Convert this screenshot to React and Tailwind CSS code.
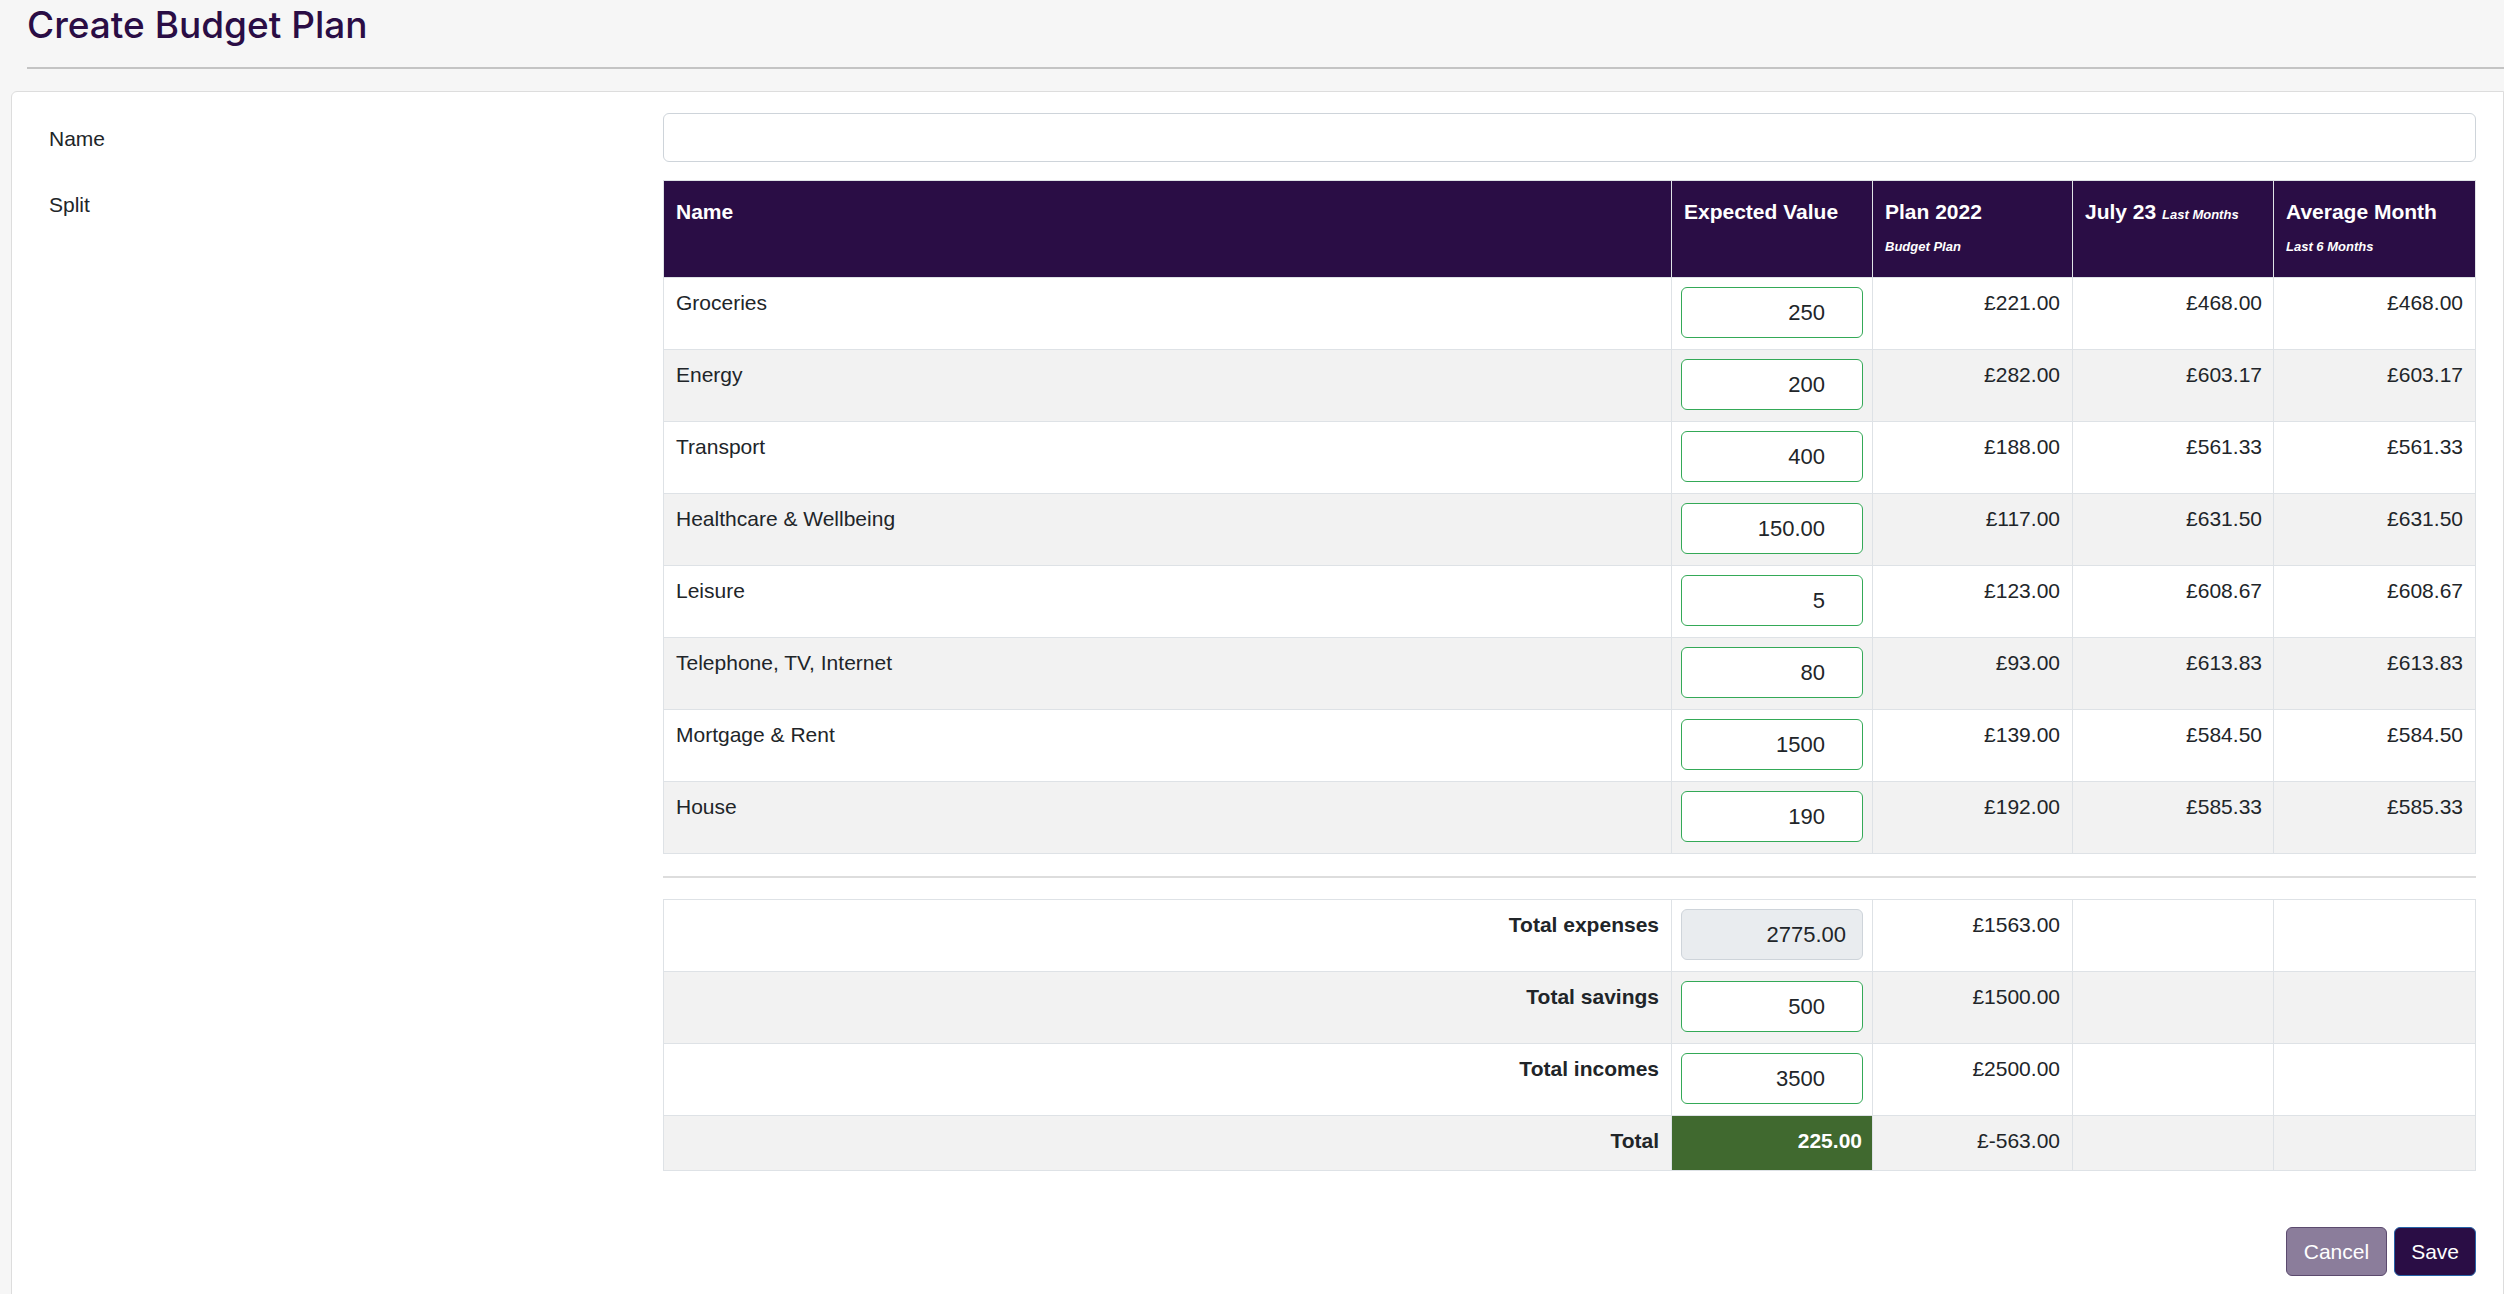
import React from "react";

const rows = [
  { name: "Groceries", val: "250", plan: "£221.00", july: "£468.00", avg: "£468.00" },
  { name: "Energy", val: "200", plan: "£282.00", july: "£603.17", avg: "£603.17" },
  { name: "Transport", val: "400", plan: "£188.00", july: "£561.33", avg: "£561.33" },
  { name: "Healthcare & Wellbeing", val: "150.00", plan: "£117.00", july: "£631.50", avg: "£631.50" },
  { name: "Leisure", val: "5", plan: "£123.00", july: "£608.67", avg: "£608.67" },
  { name: "Telephone, TV, Internet", val: "80", plan: "£93.00", july: "£613.83", avg: "£613.83" },
  { name: "Mortgage & Rent", val: "1500", plan: "£139.00", july: "£584.50", avg: "£584.50" },
  { name: "House", val: "190", plan: "£192.00", july: "£585.33", avg: "£585.33" },
];

function Cols() {
  return (
    <colgroup>
      <col className="w-[1008px]" />
      <col className="w-[201px]" />
      <col className="w-[200px]" />
      <col className="w-[201px]" />
      <col className="w-[202px]" />
    </colgroup>
  );
}

function ValInput({ value, readOnly }) {
  if (readOnly) {
    return (
      <input
        type="text"
        readOnly
        defaultValue={value}
        className="block w-full h-[51px] rounded-[6px] border border-[#ced4da] bg-[#e9ecef] pr-[16px] text-right text-[22px] leading-[32px] text-[#212529] outline-none font-['Liberation_Sans',Arial,sans-serif]"
      />
    );
  }
  return (
    <input
      type="text"
      defaultValue={value}
      className="block w-full h-[51px] rounded-[6px] border border-[#34a957] bg-white pr-[37px] text-right text-[22px] leading-[32px] text-[#212529] outline-none font-['Liberation_Sans',Arial,sans-serif]"
    />
  );
}

export default function App() {
  const td = "border border-[#dee2e6] align-top pt-[9px] pb-[11px]";
  return (
    <div className="min-h-screen bg-[#f6f6f6] font-['Liberation_Sans',Arial,sans-serif] text-[#212529]">
      <div className="pl-[27px] pt-[2px]">
        <h1 className="font-['Inter','Liberation_Sans',sans-serif] text-[37px] leading-[46px] text-[#2a0d45] font-medium">
          Create Budget Plan
        </h1>
        <div className="mt-[19px] h-[2px] bg-[#c4c4c4]" />
      </div>

      <div className="ml-[11px] mt-[22px] rounded-tl-[6px] border border-[#dddddd] bg-white pl-[37px] pr-[28px] pt-[21px] pb-[24px]">
        <div className="grid grid-cols-[614px_1fr] gap-y-[18px]">
          <div className="pt-[10px] text-[21px] leading-[32px]">Name</div>
          <input
            type="text"
            className="block w-full h-[49px] rounded-[6px] border border-[#ced4da] bg-white outline-none"
          />

          <div className="pt-[9px] text-[21px] leading-[32px]">Split</div>
          <div>
            <table className="w-full table-fixed border-collapse text-[21px] leading-[32px]">
              <Cols />
              <thead>
                <tr className="bg-[#2a0d45] text-white">
                  <th className="border border-[#dee2e6] h-[97px] align-top pt-[15px] pl-3 text-left font-bold">Name</th>
                  <th className="border border-[#dee2e6] align-top pt-[15px] pl-3 text-left font-bold">Expected Value</th>
                  <th className="border border-[#dee2e6] align-top pt-[15px] pl-3 text-left font-bold">
                    <div>Plan 2022</div>
                    <div className="mt-[9px] text-[13px] leading-[20px] italic font-bold">Budget Plan</div>
                  </th>
                  <th className="border border-[#dee2e6] align-top pt-[15px] pl-3 text-left font-bold">
                    July 23 <span className="text-[13px] italic font-bold">Last Months</span>
                  </th>
                  <th className="border border-[#dee2e6] align-top pt-[15px] pl-3 text-left font-bold">
                    <div>Average Month</div>
                    <div className="mt-[9px] text-[13px] leading-[20px] italic font-bold">Last 6 Months</div>
                  </th>
                </tr>
              </thead>
              <tbody>
                {rows.map((r, i) => (
                  <tr key={r.name} className={i % 2 === 1 ? "bg-[#f2f2f2]" : "bg-white"}>
                    <td className={`${td} pl-3`}>{r.name}</td>
                    <td className={`${td} px-[9px]`}>
                      <ValInput value={r.val} />
                    </td>
                    <td className={`${td} pr-3 text-right`}>{r.plan}</td>
                    <td className={`${td} pr-[11px] text-right`}>{r.july}</td>
                    <td className={`${td} pr-3 text-right`}>{r.avg}</td>
                  </tr>
                ))}
              </tbody>
            </table>

            <div className="mt-[22px] mb-[21px] h-[2px] bg-[#dddddd]" />

            <table className="w-full table-fixed border-collapse text-[21px] leading-[32px]">
              <Cols />
              <tbody>
                <tr className="bg-white">
                  <td className={`${td} pr-3 text-right font-bold`}>Total expenses</td>
                  <td className={`${td} px-[9px]`}>
                    <ValInput value="2775.00" readOnly />
                  </td>
                  <td className={`${td} pr-3 text-right`}>£1563.00</td>
                  <td className={td}></td>
                  <td className={td}></td>
                </tr>
                <tr className="bg-[#f2f2f2]">
                  <td className={`${td} pr-3 text-right font-bold`}>Total savings</td>
                  <td className={`${td} px-[9px]`}>
                    <ValInput value="500" />
                  </td>
                  <td className={`${td} pr-3 text-right`}>£1500.00</td>
                  <td className={td}></td>
                  <td className={td}></td>
                </tr>
                <tr className="bg-white">
                  <td className={`${td} pr-3 text-right font-bold`}>Total incomes</td>
                  <td className={`${td} px-[9px]`}>
                    <ValInput value="3500" />
                  </td>
                  <td className={`${td} pr-3 text-right`}>£2500.00</td>
                  <td className={td}></td>
                  <td className={td}></td>
                </tr>
                <tr className="bg-[#f2f2f2]">
                  <td className="border border-[#dee2e6] align-top pt-[9px] pb-[13px] pr-3 text-right font-bold">Total</td>
                  <td className="border border-[#dee2e6] align-top pt-[9px] pb-[13px] pr-[10px] text-right font-bold text-white bg-[#40692f]">225.00</td>
                  <td className="border border-[#dee2e6] align-top pt-[9px] pb-[13px] pr-3 text-right">£-563.00</td>
                  <td className="border border-[#dee2e6]"></td>
                  <td className="border border-[#dee2e6]"></td>
                </tr>
              </tbody>
            </table>

            <div className="mt-[56px] flex justify-end gap-[7px]">
              <button className="h-[49px] rounded-[6px] border border-[#5b4a6e] bg-[#8b7d9b] px-[17px] text-[21px] leading-[32px] text-white">
                Cancel
              </button>
              <button className="h-[49px] rounded-[6px] border border-[#2563a8] bg-[#2a0d45] px-[16px] text-[21px] leading-[32px] text-white">
                Save
              </button>
            </div>
          </div>
        </div>
      </div>
    </div>
  );
}
